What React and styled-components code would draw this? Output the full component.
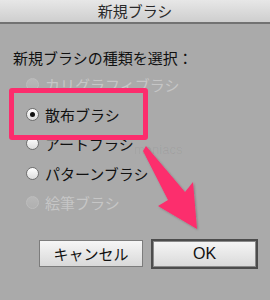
import React from "react";
import styled, { createGlobalStyle } from "styled-components";

const Global = createGlobalStyle`
  html, body { margin: 0; padding: 0; background: #aaaaaa; }
  * { box-sizing: border-box; }
`;

const Window = styled.div`
  position: relative;
  width: 270px;
  height: 300px;
  overflow: hidden;
  background: #aaaaaa;
  font-family: "Noto Sans CJK JP", "Noto Sans", sans-serif;
  color: #111;
`;

const TitleBar = styled.div`
  height: 24px;
  padding-bottom: 2px;
  border-bottom: 2px solid #727272;
  background: linear-gradient(#e7e7e7, #cecece);
  display: flex;
  align-items: center;
  justify-content: center;
  font-size: 15px;
  color: #2a2a2a;
`;

const Body = styled.div`
  padding: 24px 0 0 13px;
`;

const Prompt = styled.div`
  font-size: 15px;
  line-height: 20px;
  height: 20px;
`;

const Options = styled.div`
  margin-top: 2px;
  padding-left: 13px;
  display: flex;
  flex-direction: column;
`;

const Option = styled.div`
  height: 29.5px;
  display: flex;
  align-items: center;
  gap: 6px;
  font-size: 15px;
  color: ${(p) => (p.$disabled ? "#c6c6c6" : "#111")};
`;

const Radio = styled.span`
  position: relative;
  width: 13px;
  height: 13px;
  border-radius: 50%;
  flex: none;
  border: 1px solid ${(p) => (p.$disabled ? "#bdbdbd" : "#6f6f6f")};
  background: ${(p) =>
    p.$disabled
      ? "linear-gradient(#b8b8b8, #b0b0b0)"
      : "linear-gradient(#ffffff, #dcdcdc)"};
  &::after {
    content: "";
    display: ${(p) => (p.$checked ? "block" : "none")};
    position: absolute;
    left: 3px;
    top: 3px;
    width: 5px;
    height: 5px;
    border-radius: 50%;
    background: #111;
  }
`;

const ButtonRow = styled.div`
  margin-top: 21px;
  padding-left: 26px;
  display: flex;
  align-items: center;
  gap: 8px;
`;

const Button = styled.div`
  width: ${(p) => (p.$default ? "107px" : "104px")};
  height: ${(p) => (p.$default ? "30px" : "27px")};
  border: ${(p) => (p.$default ? "2px solid #4c4c4c" : "1px solid #7c7c7c")};
  box-shadow: ${(p) => (p.$default ? "inset 0 0 0 1px #8a8a8a" : "none")};
  background: linear-gradient(#f6f6f6, #d9d9d9);
  display: flex;
  align-items: center;
  justify-content: center;
  font-size: ${(p) => (p.$default ? "16px" : "15px")};
  font-family: ${(p) =>
    p.$default ? '"Liberation Sans", sans-serif' : '"Noto Sans CJK JP", sans-serif'};
  color: #111;
`;

const Highlight = styled.div`
  position: absolute;
  left: 9px;
  top: 88px;
  width: 139px;
  height: 52px;
  border: 5px solid #fc2d6d;
  border-radius: 3px;
`;

const Watermark = styled.div`
  position: absolute;
  left: 134px;
  top: 142px;
  font-family: "Liberation Sans", sans-serif;
  font-size: 13px;
  color: rgba(0, 0, 0, 0.06);
  pointer-events: none;
`;

const ArrowSvg = styled.svg`
  position: absolute;
  left: 0;
  top: 0;
  pointer-events: none;
`;

const options = [
  { label: "カリグラフィブラシ", disabled: true },
  { label: "散布ブラシ", checked: true },
  { label: "アートブラシ" },
  { label: "パターンブラシ" },
  { label: "絵筆ブラシ", disabled: true },
];

export default function App() {
  return (
    <Window>
      <Global />
      <TitleBar>新規ブラシ</TitleBar>
      <Body>
        <Prompt>新規ブラシの種類を選択：</Prompt>
        <Options>
          {options.map((o) => (
            <Option key={o.label} $disabled={o.disabled}>
              <Radio $disabled={o.disabled} $checked={o.checked} />
              {o.label}
            </Option>
          ))}
        </Options>
        <ButtonRow>
          <Button>キャンセル</Button>
          <Button $default>OK</Button>
        </ButtonRow>
      </Body>
      <Watermark>maniacs</Watermark>
      <Highlight />
      <ArrowSvg width="270" height="300" viewBox="0 0 270 300">
        <defs>
          <filter id="sh" x="-20%" y="-20%" width="140%" height="140%">
            <feDropShadow dx="1" dy="1" stdDeviation="1.2" floodColor="#000" floodOpacity="0.25" />
          </filter>
        </defs>
        <polygon
          points="143,151 146,146 185,192 193,182 197,229 158,206 168,200"
          fill="#fc2d6d"
          strokeLinejoin="round"
          filter="url(#sh)"
        />
      </ArrowSvg>
    </Window>
  );
}
